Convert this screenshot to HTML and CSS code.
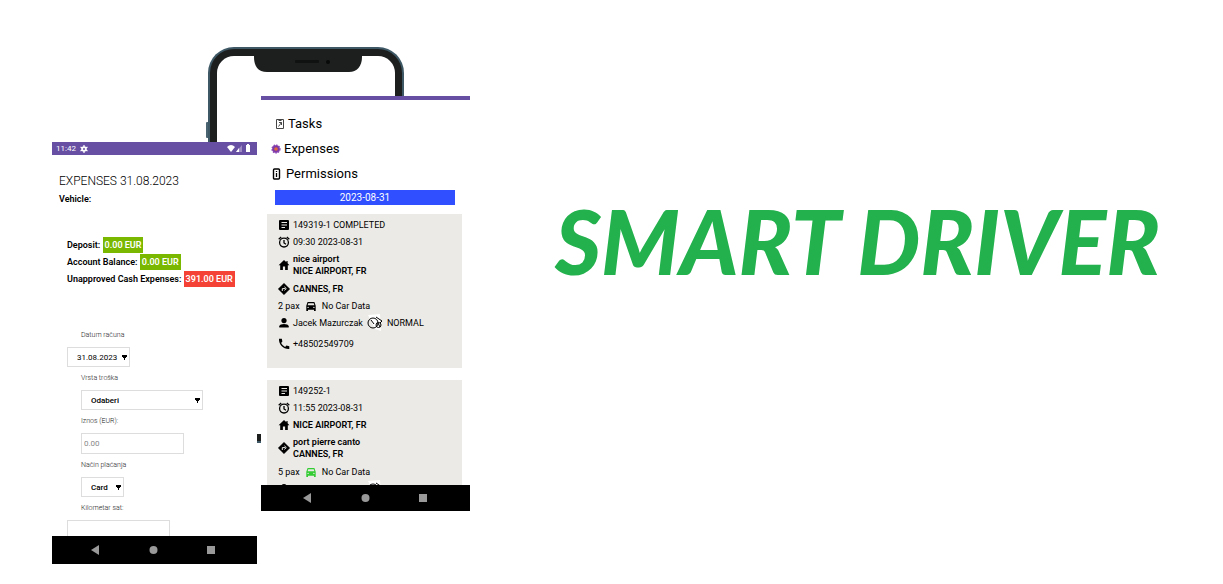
FILE: index.html
```html
<!DOCTYPE html>
<html lang="en">
<head>
<meta charset="utf-8">
<title>Smart Driver</title>
<link rel="stylesheet" href="styles.css">
</head>
<body>
<svg class="sprite" aria-hidden="true">
  <symbol id="doc" viewBox="0 0 12 12"><rect x="1" y="1" width="10" height="10" rx="1"/><path d="M3.500 3.500h5.500M3.500 6h5.500M3.500 8.500h3.500" stroke="#ebeae6" stroke-width="1"/></symbol>
  <symbol id="alarm" viewBox="0 0 12 12"><g fill="none" stroke="#000" stroke-width="1.300"><circle cx="6" cy="6.600" r="4.400"/><path d="M6 4v3l2 1.200M.7 3.200 3.200 1M8.800 1l2.500 2.200"/></g></symbol>
  <symbol id="home" viewBox="0 0 12 12"><path d="M6 1 .6 6.200h1.600V11h2.700V7.600h2.200V11h2.700V6.200h1.600L9.600 4.300V2H8.400v1.300z"/></symbol>
  <symbol id="turn" viewBox="0 0 12 12"><path d="M6 .2 11.800 6 6 11.800.2 6z" stroke="#000" stroke-width=".4" stroke-linejoin="round"/><path d="M4.300 8V5.600h3M6.400 3.800l1.900 1.800-1.900 1.800" fill="none" stroke="#ebeae6" stroke-width="1"/></symbol>
  <symbol id="car" viewBox="0 0 12 12"><path fill="currentColor" fill-rule="evenodd" d="M2.600 2h6.800l1.300 3.700V11H9V9.700H3V11H1.300V5.700zM3.300 3.200 2.600 5.300h6.800L8.700 3.200zM3.100 6.700a.7.7 0 1 0 .01 1.400.7.7 0 0 0 0-1.400zM8.900 6.700a.7.7 0 1 0 .01 1.400.7.7 0 0 0 0-1.400z"/></symbol>
  <symbol id="person" viewBox="0 0 12 12"><circle cx="6" cy="3.600" r="2.600"/><path d="M1.300 10.600V9.300C1.300 7.800 4 7.100 6 7.100s4.700.7 4.700 2.200v1.300z"/></symbol>
  <symbol id="phone" viewBox="0 0 12 12"><path d="M1 .8h2.800l.6 2.800-1.300 1.300a9 9 0 0 0 4 4l1.300-1.300 2.900.6v2.800C5.500 11.400.6 6.500 1 .8z"/></symbol>
  <symbol id="clock" viewBox="0 0 18 18"><path d="M2 1 14 0l1 17-6-2z" fill="#fff"/><g fill="none" stroke="#000"><circle cx="7" cy="9" r="5"/><circle cx="12.500" cy="11" r="2.500"/><path d="m5 6 3 4M10 3l6 4-2 2M12 9l2 4"/></g></symbol>
</svg>

<main class="hero">
  <div class="collage">
    <svg class="device" viewBox="0 0 200 398" aria-hidden="true">
      <rect x="1" y="76" width="4" height="16" rx="1" fill="#4a6472"/>
      <rect x="3" y="1" width="196" height="396" rx="26" fill="#3e5866"/>
      <rect x="5" y="3" width="192" height="392" rx="24" fill="#1d1f1e"/>
      <rect x="12" y="10" width="178" height="378" rx="17" fill="#fff"/>
      <path d="M49 6h108v5c0 9-5 15-13 15H62c-9 0-13-6-13-15z" fill="#1d1f1e"/>
      <rect x="90" y="14" width="24" height="3" rx="1" fill="#101111"/><circle cx="123" cy="16" r="2" fill="#080909"/>
    </svg>

    <section class="screen expenses">
      <header class="status">
        <span class="time">11:42</span>
        <svg width="8" height="8" viewBox="0 0 8 8" aria-hidden="true"><circle cx="4" cy="4" r="2" fill="none" stroke="#fff" stroke-width="1.600"/><path d="M4 0v8M.5 2l7 4M.5 6l7-4" stroke="#fff" stroke-width="1.200"/><circle cx="4" cy="4" r="1" fill="#674fa3"/></svg>
        <svg class="signal" width="24" height="9" viewBox="0 0 24 9" aria-hidden="true"><path d="M0 3q4-4 8 0L4 8z" fill="#fff"/><path d="M15 1v7H9z" fill="#9d8bc4"/><path d="M12 4v4H9z" fill="#fff"/><path d="M19 1h1V0h2v1h1v7h-4z" fill="#fff"/></svg>
      </header>
      <div class="body">
        <h2 class="title">EXPENSES 31.08.2023</h2>
        <p class="vehicle">Vehicle:</p>
        <div class="totals">
          <p class="total">Deposit: <span class="badge">0.00 EUR</span></p>
          <p class="total">Account Balance: <span class="badge">0.00 EUR</span></p>
          <p class="total">Unapproved Cash Expenses: <span class="badge due">391.00 EUR</span></p>
        </div>
        <form class="form">
          <label for="date">Datum računa</label>
          <select id="date" class="control date outdent"><option>31.08.2023</option></select>
          <label for="type">Vrsta troška</label>
          <select id="type" class="control wide strong"><option>Odaberi</option></select>
          <label for="amount">Iznos (EUR):</label>
          <input id="amount" class="control text" type="text" placeholder="0.00">
          <label for="pay">Način plaćanja</label>
          <select id="pay" class="control short strong"><option>Card</option></select>
          <label for="km">Kilometar sat:</label>
          <input id="km" class="control text outdent" type="text">
        </form>
      </div>
      <nav class="keys" aria-label="System">
        <svg width="9" height="10" viewBox="0 0 9 10"><path d="M0 5 8 0v10z"/></svg>
        <svg width="9" height="10" viewBox="0 0 9 10"><circle cx="4.500" cy="5" r="4"/></svg>
        <svg width="9" height="10" viewBox="0 0 9 10"><path d="M0 1h8v8H0z"/></svg>
      </nav>
    </section>

    <section class="screen tasks">
      <div class="strip"></div>
      <div class="body">
        <ul class="menu">
          <li class="first"><svg width="10" height="12" viewBox="0 0 10 12" fill="none" stroke="#444" aria-hidden="true"><path d="M1.500 1.500h7v9h-7zM3.500 2.500h3M3.500 8.500l3-4M4 4.500h2.500V7"/></svg>Tasks</li>
          <li><svg width="10" height="10" viewBox="0 0 10 10" aria-hidden="true"><circle cx="5" cy="5" r="3.800" fill="#7b3aa6" stroke="#8c44b4" stroke-width="1.600" stroke-dasharray="1.500 1"/><circle cx="5" cy="5" r="1.800" fill="#e5683c"/></svg>Expenses</li>
          <li class="last"><svg width="9" height="12" viewBox="0 0 9 12" fill="none" stroke="#000" aria-hidden="true"><rect x="1.500" y="1" width="6" height="10" rx="1" stroke-width="1.400"/><path d="M4.500 3v1M4.500 5v4" stroke-width="1.300"/></svg>Permissions</li>
        </ul>
        <p class="day">2023-08-31</p>
        <article class="card">
          <p class="row"><svg class="icon"><use href="#doc"/></svg>149319-1 COMPLETED</p>
          <p class="row"><svg class="icon"><use href="#alarm"/></svg>09:30 2023-08-31</p>
          <p class="row place"><svg class="icon"><use href="#home"/></svg><span>nice airport<br>NICE AIRPORT, FR</span></p>
          <p class="row place"><svg class="icon"><use href="#turn"/></svg>CANNES, FR</p>
          <p class="row pax">2 pax <svg class="icon"><use href="#car"/></svg> No Car Data</p>
          <p class="row driver"><svg class="icon"><use href="#person"/></svg>Jacek Mazurczak <svg class="mark"><use href="#clock"/></svg> NORMAL</p>
          <p class="row call"><svg class="icon"><use href="#phone"/></svg>+48502549709</p>
        </article>
        <article class="card">
          <p class="row"><svg class="icon"><use href="#doc"/></svg>149252-1</p>
          <p class="row"><svg class="icon"><use href="#alarm"/></svg>11:55 2023-08-31</p>
          <p class="row place"><svg class="icon"><use href="#home"/></svg>NICE AIRPORT, FR</p>
          <p class="row place"><svg class="icon"><use href="#turn"/></svg><span>port pierre canto<br>CANNES, FR</span></p>
          <p class="row pax">5 pax <svg class="icon free"><use href="#car"/></svg> No Car Data</p>
          <p class="row driver"><svg class="icon"><use href="#person"/></svg>Jacek Mazurczak <svg class="mark"><use href="#clock"/></svg></p>
        </article>
      </div>
      <nav class="keys" aria-label="System">
        <svg width="9" height="10" viewBox="0 0 9 10"><path d="M0 5 8 0v10z"/></svg>
        <svg width="9" height="10" viewBox="0 0 9 10"><circle cx="4.500" cy="5" r="4"/></svg>
        <svg width="9" height="10" viewBox="0 0 9 10"><path d="M0 1h8v8H0z"/></svg>
      </nav>
    </section>
  </div>
  <h1 class="brand">SMART DRIVER</h1>
</main>
</body>
</html>
```
FILE: styles.css
```css
* { box-sizing: border-box; }
body { margin: 0; background: #fff; color: #000; font-family: Roboto, "Liberation Sans", sans-serif; }
h1, h2, p, ul { margin: 0; padding: 0; }
svg { flex: none; }
.sprite { position: absolute; width: 0; height: 0; }

.hero { display: flex; align-items: flex-start; min-height: 100vh; }
.collage { position: relative; display: flex; align-items: flex-start; gap: 4px; padding: 96px 0 20px 52px; }
.device { position: absolute; left: 205px; top: 46px; width: 200px; height: 398px; }
.brand {
  flex: 1; padding: 191px 0 0 22px; text-align: center; white-space: nowrap;
  font: italic 900 89px/100px Lato, sans-serif; color: #22b14c;
}

.screen { position: relative; display: flex; flex-direction: column; background: #fff; }
.screen .body { flex: 1; min-height: 0; overflow: hidden; }
.expenses { width: 205px; height: 422px; margin-top: 46px; }
.tasks { width: 209px; height: 415px; }

.status { display: flex; align-items: center; height: 13px; padding: 0 6px 0 4px; gap: 4px; background: #674fa3; color: #fff; }
.time { font-size: 8px; line-height: 13px; }
.signal { margin-left: auto; }
.strip { height: 4px; background: #674fa3; }
.keys { display: flex; align-items: center; justify-content: center; gap: 49px; height: 28px; padding-right: 2px; background: #000; fill: #999; }
.tasks .keys { height: 26px; padding-right: 0; }

.title { padding: 17px 0 0 7px; font-size: 12px; line-height: 18px; font-weight: 300; }
.vehicle { padding-left: 7px; font-size: 9px; line-height: 18px; font-weight: 600; }
.totals { display: flex; flex-direction: column; gap: 1px; padding: 29px 0 0 15px; }
.total { font-size: 9px; line-height: 16px; font-weight: 600; white-space: nowrap; }
.badge { display: inline-block; padding: 0 2px; background: #7ab800; color: #fff; }
.due { background: #f44336; }

.form { display: flex; flex-direction: column; align-items: flex-start; padding: 43px 0 0 29px; }
.form label { margin-bottom: 6px; font-size: 7px; line-height: 11px; font-weight: 300; color: #222; }
.control {
  height: 20px; margin: 0 0 6px; padding: 0 9px; border: 1px solid #ddd; border-radius: 0;
  background: #fff; color: #000; font: 8px Roboto, sans-serif; appearance: none;
}
select.control {
  background: #fff conic-gradient(from -32deg at 50% 100%, #000 64deg, transparent 0) no-repeat right 2px center / 5px 5px;
}
.date { width: 63px; }
.wide { width: 122px; }
.short { width: 43px; }
.text { width: 103px; height: 21px; padding: 0 2px; }
.strong { font-weight: 500; }
.outdent { margin-left: -14px; }
.control::placeholder { color: #888; }

.menu { list-style: none; padding: 11px 0 0 10px; }
.menu li { display: flex; align-items: center; gap: 3px; height: 25px; font-size: 13px; }
.menu .first { padding-left: 4px; gap: 3px; }
.menu .last { padding-left: 1px; gap: 5px; }
.day { margin: 4px 15px 9px 14px; background: #304ffe; color: #fff; font-size: 10px; line-height: 15px; text-align: center; }
.card { margin: 0 8px 12px 6px; padding: 2px 0 12px 11px; background: #ebeae6; }
.row { display: flex; align-items: center; gap: 3px; min-height: 17px; font-size: 9px; line-height: 12px; white-space: nowrap; }
.icon { width: 12px; height: 12px; }
.place { font-weight: 600; }
.place:has(span) { min-height: 30px; }
.pax { gap: 5px; }
.free { color: #3c3; }
.driver { height: 18px; }
.mark { width: 18px; height: 18px; }
.call { height: 24px; }
```
